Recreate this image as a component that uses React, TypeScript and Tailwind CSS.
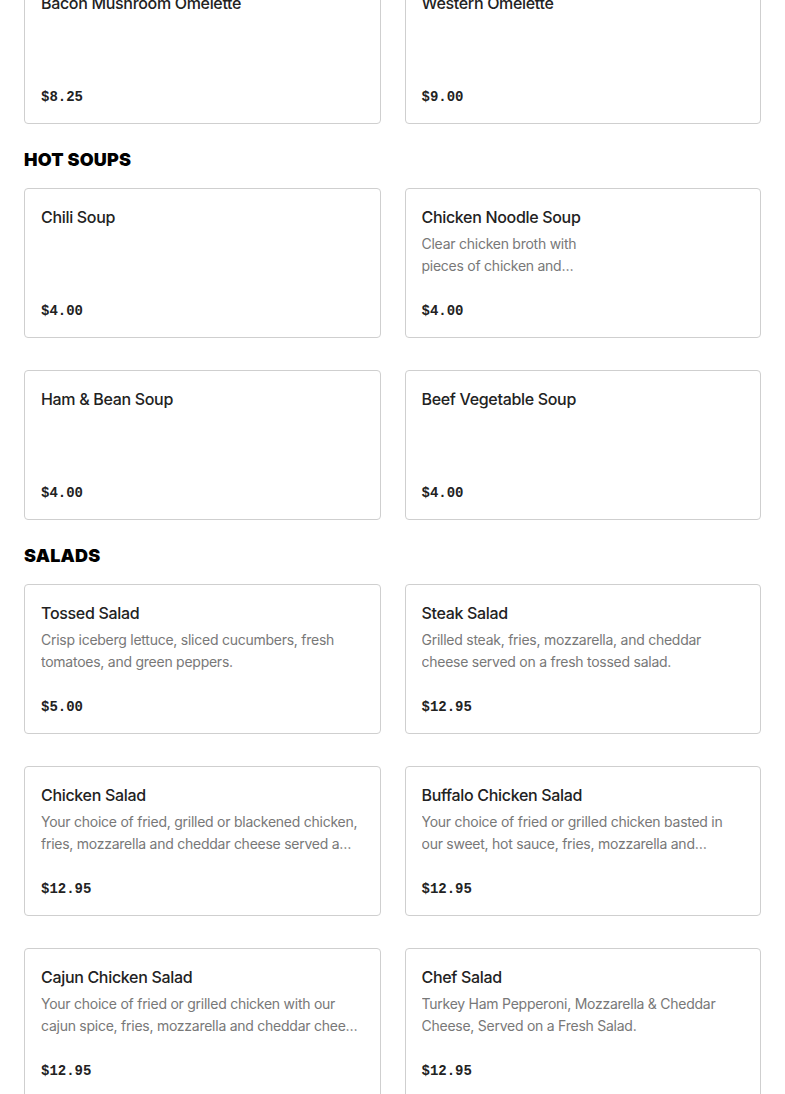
import React from "react";

type Item = { name: string; desc?: React.ReactNode; price: string };

const sections: { title?: string; rows: Item[][] }[] = [
  {
    rows: [
      [
        { name: "Bacon Mushroom Omelette", price: "$8.25" },
        { name: "Western Omelette", price: "$9.00" },
      ],
    ],
  },
  {
    title: "HOT SOUPS",
    rows: [
      [
        { name: "Chili Soup", price: "$4.00" },
        {
          name: "Chicken Noodle Soup",
          desc: (
            <>
              Clear chicken broth with
              <br />
              pieces of chicken and
              <br />
              noodles
            </>
          ),
          price: "$4.00",
        },
      ],
      [
        { name: "Ham & Bean Soup", price: "$4.00" },
        { name: "Beef Vegetable Soup", price: "$4.00" },
      ],
    ],
  },
  {
    title: "SALADS",
    rows: [
      [
        {
          name: "Tossed Salad",
          desc: "Crisp iceberg lettuce, sliced cucumbers, fresh tomatoes, and green peppers.",
          price: "$5.00",
        },
        {
          name: "Steak Salad",
          desc: "Grilled steak, fries, mozzarella, and cheddar cheese served on a fresh tossed salad.",
          price: "$12.95",
        },
      ],
      [
        {
          name: "Chicken Salad",
          desc: "Your choice of fried, grilled or blackened chicken, fries, mozzarella and cheddar cheese served a fresh tossed salad.",
          price: "$12.95",
        },
        {
          name: "Buffalo Chicken Salad",
          desc: "Your choice of fried or grilled chicken basted in our sweet, hot sauce, fries, mozzarella and cheddar cheese served on a fresh tossed salad.",
          price: "$12.95",
        },
      ],
      [
        {
          name: "Cajun Chicken Salad",
          desc: "Your choice of fried or grilled chicken with our cajun spice, fries, mozzarella and cheddar cheese served on a fresh tossed salad.",
          price: "$12.95",
        },
        {
          name: "Chef Salad",
          desc: "Turkey Ham Pepperoni, Mozzarella & Cheddar Cheese, Served on a Fresh Salad.",
          price: "$12.95",
        },
      ],
    ],
  },
];

function Card({ item }: { item: Item }) {
  return (
    <div className="h-[150px] rounded-[4px] border border-[#cfcfcf] bg-white px-4 pt-4 pb-[14px] flex flex-col justify-between">
      <div>
        <div className="text-[16px] leading-[24px] font-medium tracking-[-0.02em] text-[#222222]">{item.name}</div>
        {item.desc && (
          <div className="mt-[4px] text-[14px] leading-[22px] tracking-[-0.018em] text-[#787878] line-clamp-2">
            {item.desc}
          </div>
        )}
      </div>
      <div
        className="text-[14px] leading-[24px] font-bold text-[#222222]"
        style={{ fontFamily: '"Liberation Mono", "DejaVu Sans Mono", monospace' }}
      >
        {item.price}
      </div>
    </div>
  );
}

export default function App() {
  return (
    <div className="min-h-screen bg-white px-6" style={{ fontFamily: "Inter, 'Noto Sans', sans-serif" }}>
      <div className="-mt-[26px] flex flex-col">
        {sections.map((s, si) => (
          <div key={si} className={si > 0 ? "mt-6" : ""}>
            {s.title && (
              <h2 className="mb-4 text-[18px] leading-[24px] font-black text-black tracking-[0.01em]">{s.title}</h2>
            )}
            <div className="flex flex-col gap-8">
              {s.rows.map((row, ri) => (
                <div key={ri} className="grid grid-cols-2 gap-6">
                  {row.map((it) => (
                    <Card key={it.name} item={it} />
                  ))}
                </div>
              ))}
            </div>
          </div>
        ))}
      </div>
    </div>
  );
}
